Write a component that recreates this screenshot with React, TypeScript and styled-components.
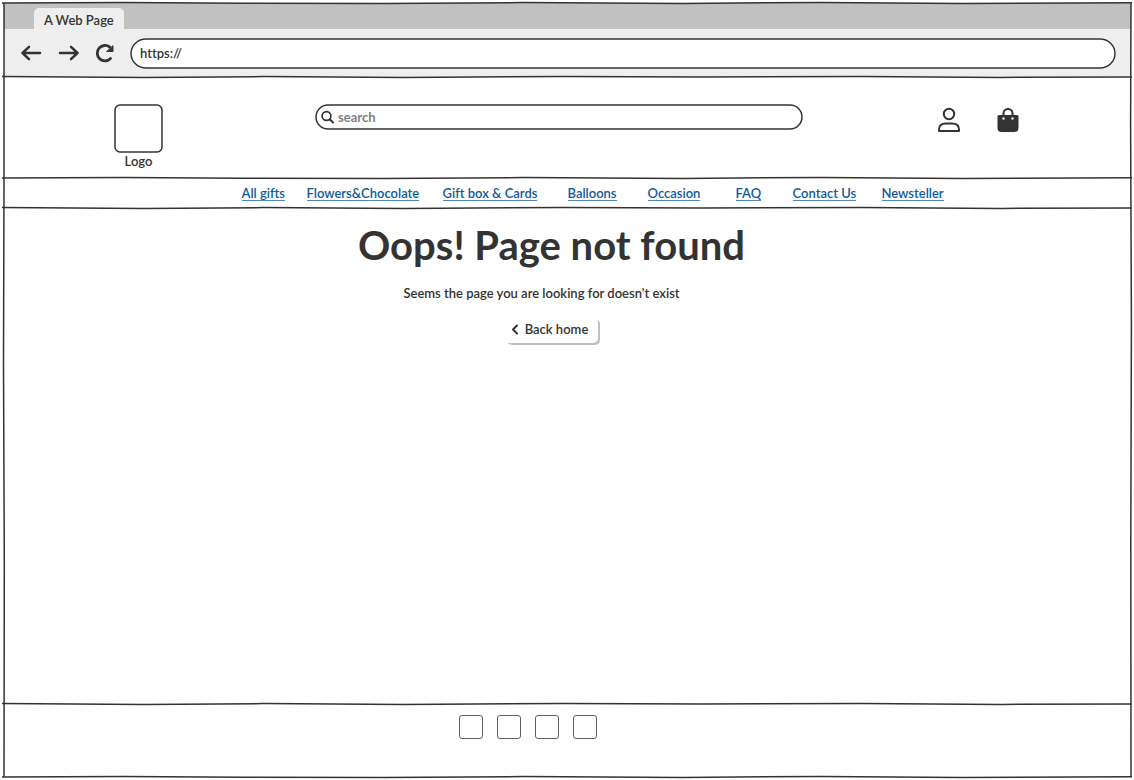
import React from "react";
import styled, { createGlobalStyle } from "styled-components";

const ink = "#333333";
const blue = "#10599d";

const GlobalStyle = createGlobalStyle`
  *, *::before, *::after { box-sizing: border-box; }
  body {
    margin: 0;
    background: #ffffff;
    color: ${ink};
    font-family: Lato, "Open Sans", sans-serif;
    font-size: 13px;
    font-weight: 600;
    font-variant-ligatures: none;
    line-height: 16px;
  }
  button, input { font: inherit; font-variant-ligatures: none; color: inherit; }
`;

const Window = styled.div`
  position: relative;
  display: flex;
  flex-direction: column;
  min-height: 100vh;
  padding: 3px 3px 3px 4px;
`;

const SideEdge = styled.svg<{ $side: "left" | "right" }>`
  position: absolute;
  top: 3px;
  bottom: 3px;
  ${(p) => p.$side}: ${(p) => (p.$side === "left" ? 2 : 1)}px;
  width: 4px;
  height: calc(100% - 6px);
  pointer-events: none;
`;

const RuleSvg = styled.svg`
  display: block;
  flex: none;
  position: relative;
  width: 100%;
  height: 4px;
  margin: -2px 0;
  overflow: visible;
`;

const TabBar = styled.div`
  display: flex;
  align-items: flex-end;
  height: 26px;
  padding-left: 30px;
  background: #c1c1c1;
`;

const Tab = styled.div`
  height: 21px;
  padding: 4px 10px 0;
  border-radius: 5px 5px 0 0;
  background: #eeeeee;
`;

const Toolbar = styled.div`
  display: flex;
  align-items: center;
  height: 48px;
  padding: 0 15px 0 16px;
  background: #eeeeee;
`;

const ToolButton = styled.button`
  display: flex;
  width: 22px;
  height: 22px;
  margin-right: 14px;
  padding: 0;
  border: 0;
  background: none;
  &:first-child { margin-right: 16px; }
`;

const Pill = styled.label<{ $height: number }>`
  position: relative;
  display: flex;
  flex: 1;
  align-items: center;
  gap: 3px;
  height: ${(p) => p.$height}px;
  border-radius: 15px;
  background: #ffffff;
`;

const OutlineSvg = styled.svg`
  position: absolute;
  inset: 0;
  width: 100%;
  height: 100%;
  pointer-events: none;
  rect {
    x: 1px;
    y: 1px;
    width: calc(100% - 2px);
    height: calc(100% - 2px);
    fill: none;
    stroke: ${ink};
    stroke-width: 1.5px;
  }
`;

const Field = styled.input`
  flex: 1;
  min-width: 0;
  padding: 0;
  border: 0;
  outline: 0;
  background: none;
  &::placeholder { color: #7d7d86; opacity: 1; }
`;

const AddressField = styled(Field)`
  padding-left: 10px;
`;

const SearchField = styled(Field)`
  font-weight: 700;
`;

const Header = styled.header`
  display: flex;
  align-items: flex-start;
  height: 101px;
  padding: 27px 111px 0 110px;
`;

const Brand = styled.a`
  display: flex;
  flex-direction: column;
  align-items: center;
  width: 49px;
  color: inherit;
  text-decoration: none;
`;

const LogoBox = styled.span`
  position: relative;
  width: 49px;
  height: 49px;
`;

const SearchArea = styled.form`
  display: flex;
  flex: 1;
  margin: 0 134px 0 152px;
`;

const Actions = styled.div`
  display: flex;
  gap: 35px;
  padding-top: 3px;
`;

const IconButton = styled.button`
  display: flex;
  width: 24px;
  height: 26px;
  padding: 0;
  border: 0;
  background: none;
`;

const Nav = styled.nav`
  display: grid;
  grid-template-columns: 65px 136px 125px 80px 88px 57px 89px 62px;
  justify-content: center;
  align-items: end;
  height: 30px;
  padding: 0 0 7px 50px;
`;

const NavLink = styled.a`
  justify-self: start;
  border-bottom: 1px solid #4d87bb;
  color: ${blue};
  line-height: 14px;
  text-decoration: none;
  white-space: nowrap;
`;

const Main = styled.main`
  display: flex;
  flex: 1;
  flex-direction: column;
  align-items: center;
  padding: 13px 32px 0 0;
`;

const Title = styled.h1`
  margin: 0;
  font-size: 40px;
  font-weight: 700;
  line-height: 48px;
`;

const Message = styled.p`
  margin: 16px 0;
  padding-right: 20px;
`;

const BackButton = styled.button`
  display: flex;
  align-items: center;
  gap: 5px;
  height: 26px;
  padding: 0 10px 2px 5px;
  border: 0;
  border-radius: 5px;
  background: #ffffff;
  box-shadow: 2px 2px 0 #c1c1c1;
`;

const Footer = styled.footer`
  display: flex;
  justify-content: center;
  gap: 14px;
  height: 73px;
  padding: 11px 79px 0 0;
`;

const SocialLink = styled.a`
  width: 24px;
  height: 24px;
  border: 1px solid #606060;
  border-radius: 3px;
`;

const Rule = ({ path }: { path: string }) => (
  <RuleSvg viewBox="0 0 1130 4" preserveAspectRatio="none" aria-hidden="true">
    <path d={path} fill="none" stroke={ink} strokeWidth="1.5" vectorEffect="non-scaling-stroke" />
  </RuleSvg>
);

const Edge = ({ side, path }: { side: "left" | "right"; path: string }) => (
  <SideEdge $side={side} viewBox="0 0 4 774" preserveAspectRatio="none" aria-hidden="true">
    <path d={path} fill="none" stroke={ink} strokeWidth="1.5" vectorEffect="non-scaling-stroke" />
  </SideEdge>
);

const Outline = ({ radius }: { radius: number }) => (
  <OutlineSvg aria-hidden="true">
    <rect rx={radius} />
  </OutlineSvg>
);

const waveA = "M-2 2 L120 1.5 L240 2.2 L380 2.6 L520 1.6 L680 2.4 L820 1.4 L960 2.5 L1131 1.8";
const waveB = "M-2 1.6 L140 2.4 L260 1.6 L400 2.6 L560 1.4 L700 2 L860 1.5 L1000 2.4 L1131 2";

const links = [
  "All gifts",
  "Flowers&Chocolate",
  "Gift box & Cards",
  "Balloons",
  "Occasion",
  "FAQ",
  "Contact Us",
  "Newsteller",
];

const socials = ["Social one", "Social two", "Social three", "Social four"];

export default function App() {
  return (
    <>
      <GlobalStyle />
      <Window>
        <Rule path={waveA} />
        <TabBar>
          <Tab>A Web Page</Tab>
        </TabBar>
        <Toolbar>
          <ToolButton aria-label="Back">
            <svg width="22" height="22" fill="none" stroke={ink} strokeWidth="2.5" strokeLinecap="round" strokeLinejoin="round">
              <path d="M20 11H2.5M9 4.8L2.5 11L9 17.2" />
            </svg>
          </ToolButton>
          <ToolButton aria-label="Forward">
            <svg width="22" height="22" fill="none" stroke={ink} strokeWidth="2.5" strokeLinecap="round" strokeLinejoin="round">
              <path d="M2 11H19.5M13 4.8L19.5 11L13 17.2" />
            </svg>
          </ToolButton>
          <ToolButton aria-label="Reload">
            <svg width="22" height="22" fill="none" stroke={ink} strokeWidth="2.8" strokeLinecap="round">
              <path d="M16.5 16.5A7.700 7.700 0 1 1 15.800 5.200" />
              <path d="M19 4V9.500H13Z" fill={ink} strokeWidth="1" strokeLinejoin="round" />
            </svg>
          </ToolButton>
          <Pill $height={31}>
            <Outline radius={15} />
            <AddressField aria-label="Address" defaultValue="https://" />
          </Pill>
        </Toolbar>
        <Rule path={waveB} />
        <Header>
          <Brand href="#">
            <LogoBox>
              <Outline radius={5} />
            </LogoBox>
            Logo
          </Brand>
          <SearchArea>
            <Pill $height={26}>
              <Outline radius={12} />
              <svg width="20" height="24" fill="none" stroke={ink} strokeWidth="1.6" strokeLinecap="round" aria-hidden="true">
                <circle cx="11.500" cy="11" r="4.400" />
                <path d="M15 14.500L18 17.500" strokeWidth="2" />
              </svg>
              <SearchField type="text" placeholder="search" aria-label="search" />
            </Pill>
          </SearchArea>
          <Actions>
            <IconButton aria-label="Account">
              <svg width="24" height="26" fill="none" stroke={ink} strokeWidth="2">
                <circle cx="12" cy="7" r="5.2" />
                <path d="M2 24V22.5C2 18.5 5 16.5 9 16.5H15C19 16.5 22 18.5 22 22.5V24Z" strokeLinejoin="round" />
              </svg>
            </IconButton>
            <IconButton aria-label="Shopping bag">
              <svg width="24" height="26">
                <path d="M3 8H21Q22.5 8 22.5 9.5V21Q22.5 25 18.5 25H5.500Q1.500 25 1.500 21V9.500Q1.500 8 3 8Z" fill={ink} />
                <path d="M7.500 9V6.500A4.500 4.500 0 0 1 16.500 6.500V9" fill="none" stroke={ink} strokeWidth="2" />
                <circle cx="7.500" cy="11.500" r="1.200" fill="#ffffff" />
                <circle cx="16.500" cy="11.500" r="1.200" fill="#ffffff" />
              </svg>
            </IconButton>
          </Actions>
        </Header>
        <Rule path={waveA} />
        <Nav>
          {links.map((text) => (
            <NavLink href="#" key={text}>
              {text}
            </NavLink>
          ))}
        </Nav>
        <Rule path={waveB} />
        <Main>
          <Title>Oops! Page not found</Title>
          <Message>Seems the page you are looking for doesn't exist</Message>
          <BackButton>
            <svg width="10" height="12" fill="none" stroke={ink} strokeWidth="2" strokeLinecap="round" strokeLinejoin="round" aria-hidden="true">
              <path d="M7 2.500L3 6.500L7 10.500" />
            </svg>
            Back home
          </BackButton>
        </Main>
        <Rule path={waveB} />
        <Footer>
          {socials.map((name) => (
            <SocialLink href="#" aria-label={name} key={name} />
          ))}
        </Footer>
        <Rule path={waveA} />
        <Edge side="left" path="M2 0 L2 180 L1.500 360 L2.300 560 L2 774" />
        <Edge side="right" path="M2 0 L1.600 120 L2.400 320 L1.800 540 L2 774" />
      </Window>
    </>
  );
}
